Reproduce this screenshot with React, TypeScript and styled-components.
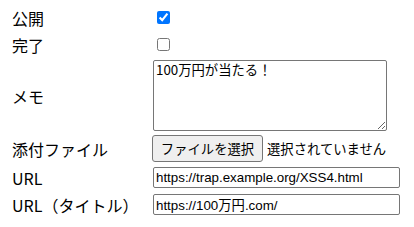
import React from "react";
import styled, { createGlobalStyle } from "styled-components";

const GlobalStyle = createGlobalStyle`
  body {
    margin: 0;
    background: #ffffff;
    font-family: "Noto Sans CJK JP", "Noto Sans", sans-serif;
  }
`;

const Form = styled.div`
  display: grid;
  grid-template-columns: 141px 1fr;
  grid-auto-rows: minmax(23px, auto);
  row-gap: 4px;
  padding: 6px 0 0 12px;
  color: #000000;
`;

const Label = styled.div`
  display: flex;
  align-items: center;
  font-size: 16px;
  line-height: 1;
  white-space: nowrap;
`;

const Field = styled.div`
  display: flex;
  align-items: center;
  gap: 4px;
`;

const Check = styled.input.attrs({ type: "checkbox" })`
  width: 13px;
  height: 13px;
  margin: 0 0 0 4px;
`;

const Memo = styled.textarea`
  box-sizing: border-box;
  width: 234px;
  height: 71px;
  margin: 0;
  padding: 2px;
  border: 1px solid #767676;
  border-radius: 2px;
  font-family: "Noto Sans CJK JP", sans-serif;
  font-size: 13.33px;
  line-height: 1.1;
  color: #000000;
  resize: both;
`;

const FileButton = styled.button`
  box-sizing: border-box;
  width: 111px;
  height: 27px;
  margin: 0 0 0 -1px;
  padding: 0 6px;
  background: #efefef;
  border: 1px solid #767676;
  border-radius: 3px;
  font-family: "Noto Sans CJK JP", sans-serif;
  font-size: 13.33px;
  color: #000000;
`;

const FileStatus = styled.span`
  font-family: "Noto Sans CJK JP", sans-serif;
  font-size: 13.33px;
`;

const TextInput = styled.input.attrs({ type: "text" })`
  box-sizing: border-box;
  width: 247px;
  height: 21px;
  margin: 0;
  padding: 1px 2px;
  border: 1px solid #767676;
  border-radius: 2px;
  font-family: "Liberation Sans", Arial, "Noto Sans CJK JP", sans-serif;
  font-size: 13.33px;
  color: #000000;
`;

export default function App() {
  return (
    <>
      <GlobalStyle />
      <Form>
        <Label>公開</Label>
        <Field>
          <Check defaultChecked />
        </Field>
        <Label>完了</Label>
        <Field>
          <Check />
        </Field>
        <Label>メモ</Label>
        <Field>
          <Memo defaultValue="100万円が当たる！" />
        </Field>
        <Label>添付ファイル</Label>
        <Field>
          <FileButton>ファイルを選択</FileButton>
          <FileStatus>選択されていません</FileStatus>
        </Field>
        <Label>URL</Label>
        <Field>
          <TextInput defaultValue="https://trap.example.org/XSS4.html" />
        </Field>
        <Label>URL（タイトル）</Label>
        <Field>
          <TextInput defaultValue="https://100万円.com/" />
        </Field>
      </Form>
    </>
  );
}
